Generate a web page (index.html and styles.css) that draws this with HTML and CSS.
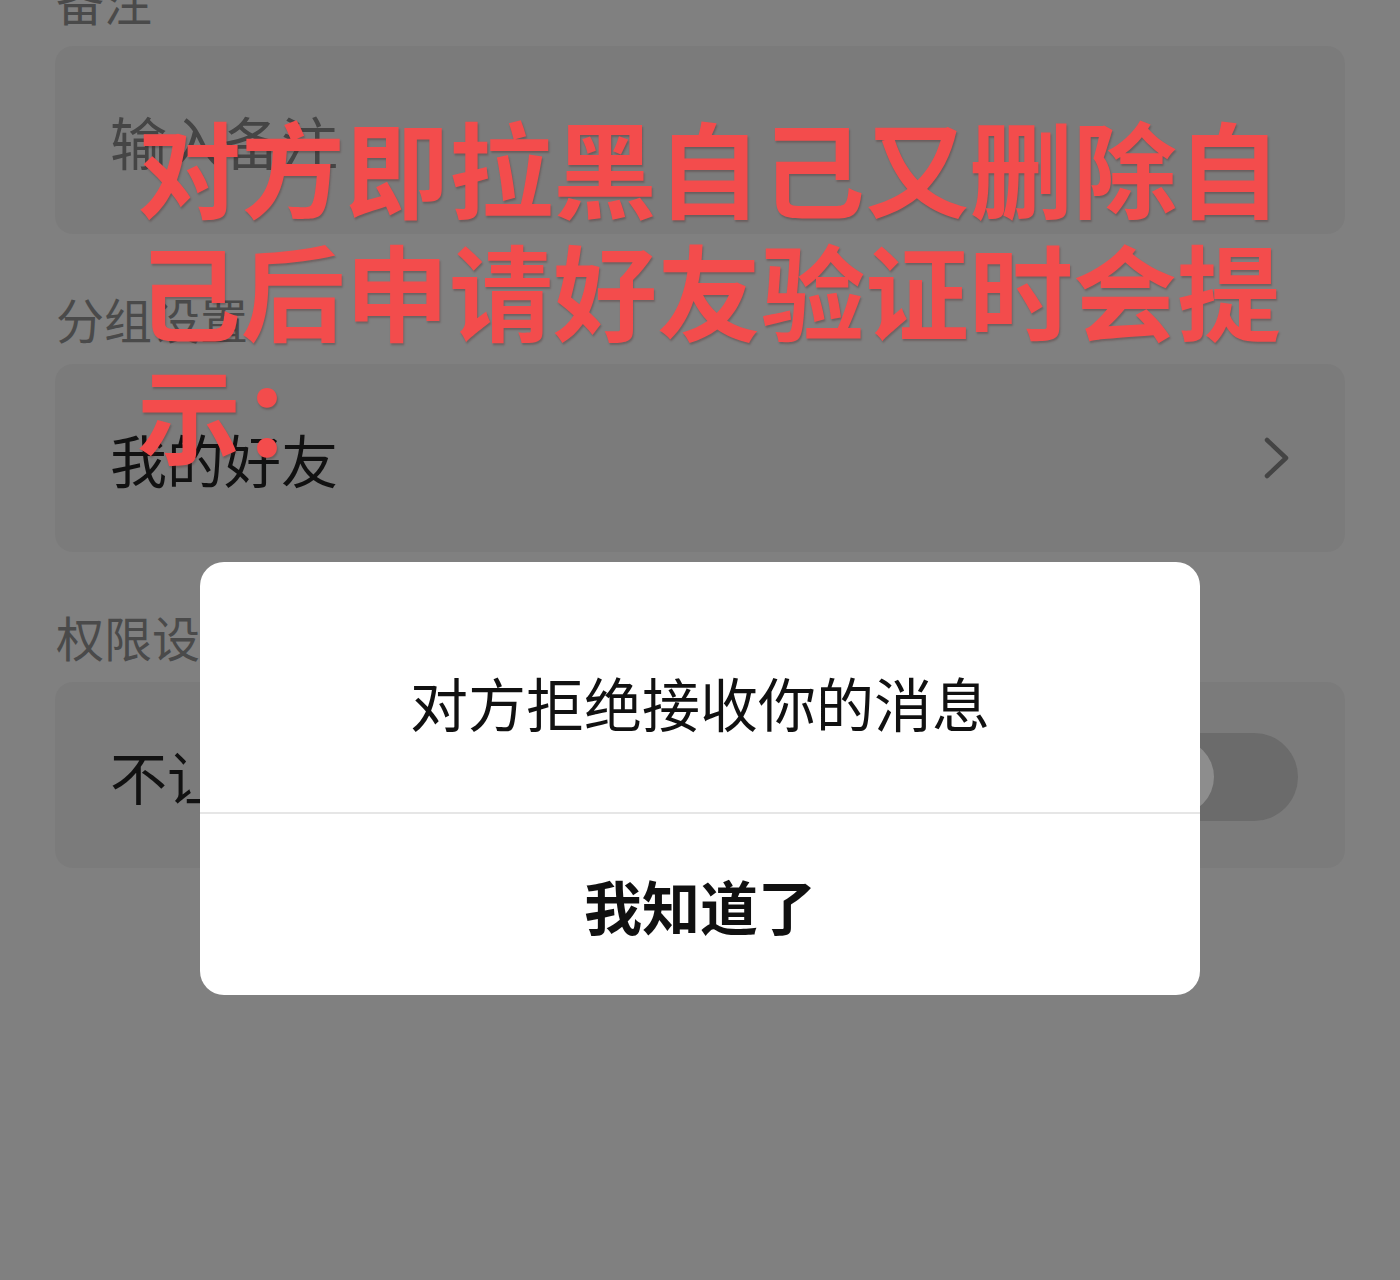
FILE: index.html
```html
<!DOCTYPE html>
<html lang="zh-CN">
<head>
<meta charset="utf-8">
<title>好友验证</title>
<link rel="stylesheet" href="styles.css">
</head>
<body>
<div class="page">
  <div class="label first">备注</div>
  <div class="card"><span class="placeholder">输入备注</span></div>

  <div class="label">分组设置</div>
  <div class="card row">
    <span class="value">我的好友</span>
    <svg class="chevron" width="30" height="42" viewBox="0 0 30 42">
      <path d="M5 3 L24 21 L5 39" fill="none" stroke="#444444" stroke-width="4.5" stroke-linecap="round" stroke-linejoin="round"/>
    </svg>
  </div>

  <div class="label">权限设置</div>
  <div class="card row short">
    <span class="value">不让他看我的朋友圈</span>
    <span class="toggle"><span class="knob"></span></span>
  </div>
</div>

<div class="caption">对方即拉黑自己又删除自己后申请好友验证时会提示：</div>

<div class="dialog">
  <div class="dialog-msg">对方拒绝接收你的消息</div>
  <div class="dialog-btn">我知道了</div>
</div>
</body>
</html>
```

FILE: styles.css
```css
html, body {
  margin: 0;
  padding: 0;
}
body {
  width: 1400px;
  height: 1280px;
  overflow: hidden;
  background: #808080;
  font-family: "Noto Sans CJK SC", "Noto Sans", sans-serif;
  position: relative;
}
.page {
  padding: 0 55px 0 55px;
}
.label {
  font-size: 48px;
  line-height: 64px;
  color: #4a4a4a;
  margin: 52px 0 14px 1px;
}
.label.first {
  margin-top: -32px;
}
.card {
  height: 188px;
  box-sizing: border-box;
  border-radius: 18px;
  background: #7b7b7b;
  display: flex;
  align-items: center;
  padding: 0 55px;
  font-size: 57px;
}
.card.short {
  height: 186px;
}
.row {
  justify-content: space-between;
}
.placeholder {
  color: #454545;
}
.value {
  color: #111111;
}
.chevron {
  margin-right: -2px;
}
.toggle {
  width: 166px;
  height: 88px;
  border-radius: 44px;
  background: #6b6b6b;
  display: flex;
  align-items: center;
  padding: 0 6px;
  box-sizing: border-box;
  margin-right: -8px;
  margin-top: 4px;
}
.knob {
  width: 76px;
  height: 76px;
  border-radius: 50%;
  background: #8d8d8d;
}
.caption {
  position: absolute;
  left: 137px;
  top: 104px;
  width: 1160px;
  font-size: 104px;
  line-height: 123px;
  font-weight: 700;
  color: #f34c4c;
  text-shadow: 1px 2px 2px rgba(70, 30, 30, 0.3);
}
.dialog {
  position: absolute;
  left: 200px;
  top: 562px;
  width: 1000px;
  height: 433px;
  border-radius: 24px;
  background: #ffffff;
  display: flex;
  flex-direction: column;
  overflow: hidden;
}
.dialog-msg {
  height: 252px;
  box-sizing: border-box;
  padding-top: 30px;
  display: flex;
  align-items: center;
  justify-content: center;
  font-size: 58px;
  color: #111111;
  border-bottom: 2px solid #e6e6e6;
}
.dialog-btn {
  flex: 1;
  display: flex;
  align-items: center;
  justify-content: center;
  font-size: 58px;
  font-weight: 700;
  color: #111111;
}
```
